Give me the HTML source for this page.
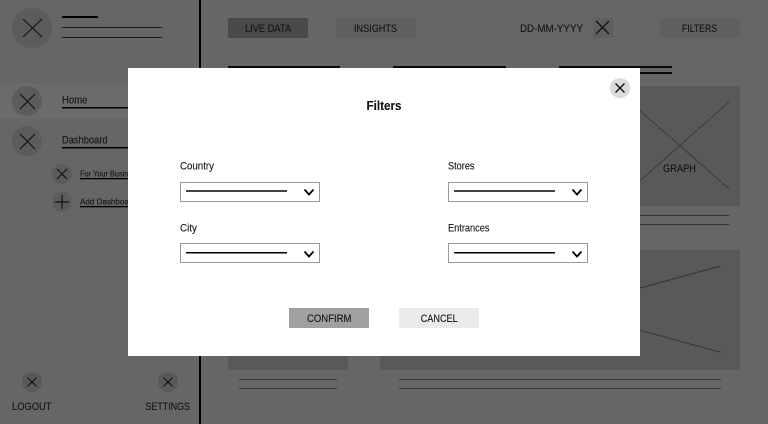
<!DOCTYPE html>
<html>
<head>
<meta charset="utf-8">
<style>
html,body{margin:0;padding:0;width:768px;height:424px;overflow:hidden;background:#666;}
svg{display:block;}
text{font-family:"Liberation Sans",sans-serif;font-size:11px;fill:#141414;stroke:#141414;stroke-width:.12px;}
</style>
</head>
<body>
<svg width="768" height="424" viewBox="0 0 768 424" xmlns="http://www.w3.org/2000/svg">
<rect width="768" height="424" fill="#666"/>
<!-- Sidebar -->
<rect x="0" y="84" width="128" height="34" fill="#6b6b6b"/>
<circle cx="32" cy="28" r="20" fill="#5c5c5c"/>
<path d="M23 19L42 37M42 19L23 37" stroke="#111" stroke-width="1.100" fill="none"/>
<rect x="62" y="16" width="36" height="2" fill="#000"/>
<rect x="62" y="27" width="100" height="1" fill="#1a1a1a"/>
<rect x="62" y="37" width="100" height="1" fill="#1a1a1a"/>
<rect x="199" y="0" width="2" height="424" fill="#000"/>

<circle cx="27" cy="101" r="15" fill="#5c5c5c"/>
<path d="M20 94L35 109M35 94L20 109" stroke="#111" stroke-width="1.200" fill="none"/>
<text x="62" y="103.500" textLength="25.500" lengthAdjust="spacingAndGlyphs">Home</text>
<rect x="62" y="107" width="66" height="1.500" fill="#000"/>

<circle cx="27" cy="141" r="15" fill="#5c5c5c"/>
<path d="M20 134L35 149M35 134L20 149" stroke="#111" stroke-width="1.200" fill="none"/>
<text x="62" y="143.500" textLength="45.500" lengthAdjust="spacingAndGlyphs">Dashboard</text>
<rect x="62" y="147" width="66" height="1.500" fill="#000"/>

<circle cx="62" cy="174" r="10" fill="#5c5c5c"/>
<path d="M57 169L67 179M67 169L57 179" stroke="#111" stroke-width="1.200" fill="none"/>
<text x="80" y="176.500" style="font-size:8.500px" textLength="60" lengthAdjust="spacingAndGlyphs">For Your Business</text>
<rect x="80" y="178" width="48" height="1.300" fill="#000"/>

<circle cx="62" cy="202" r="10" fill="#5c5c5c"/>
<path d="M62 195V209M55 202H69" stroke="#111" stroke-width="1.200" fill="none"/>
<text x="80" y="204.500" style="font-size:8.500px" textLength="56" lengthAdjust="spacingAndGlyphs">Add Dashboard</text>
<rect x="80" y="206" width="48" height="1.300" fill="#000"/>

<circle cx="32" cy="382" r="10" fill="#5a5a5a"/>
<path d="M27.500 377.500L36.500 386.500M36.500 377.500L27.500 386.500" stroke="#111" stroke-width="1.100" fill="none"/>
<text x="12" y="410" textLength="39.500" lengthAdjust="spacingAndGlyphs">LOGOUT</text>
<circle cx="168" cy="382" r="10" fill="#5a5a5a"/>
<path d="M163.500 377.500L172.500 386.500M172.500 377.500L163.500 386.500" stroke="#111" stroke-width="1.100" fill="none"/>
<text x="145.500" y="410" textLength="44.500" lengthAdjust="spacingAndGlyphs">SETTINGS</text>

<!-- Top bar -->
<rect x="228" y="18" width="80" height="20" fill="#4a4a4a"/>
<text x="245" y="32" textLength="46" lengthAdjust="spacingAndGlyphs">LIVE DATA</text>
<rect x="336" y="18" width="80" height="20" fill="#5f5f5f"/>
<text x="354" y="32" textLength="43" lengthAdjust="spacingAndGlyphs">INSIGHTS</text>
<text x="520" y="32" textLength="63" lengthAdjust="spacingAndGlyphs">DD-MM-YYYY</text>
<rect x="593" y="18" width="20" height="20" fill="#5f5f5f"/>
<path d="M596 21L609 34M609 21L596 34" stroke="#111" stroke-width="1.300" fill="none"/>
<rect x="660" y="18" width="80" height="20" fill="#5f5f5f"/>
<text x="682" y="32" textLength="35" lengthAdjust="spacingAndGlyphs">FILTERS</text>

<!-- Content behind -->
<rect x="228" y="66" width="112" height="2" fill="#0a0a0a"/>
<rect x="393" y="66" width="113" height="2" fill="#0a0a0a"/>
<rect x="559" y="66" width="113" height="2" fill="#0a0a0a"/>
<rect x="559" y="72" width="113" height="2" fill="#0a0a0a"/>

<rect x="560" y="86" width="180" height="120" fill="#595959"/>
<path d="M729 102L640 180.700M640 110.700L729 188.700" stroke="#3a3a3a" stroke-width="1" fill="none"/>
<text x="663" y="172" textLength="33" lengthAdjust="spacingAndGlyphs">GRAPH</text>
<rect x="560" y="215" width="169" height="1" fill="#333"/>
<rect x="560" y="224" width="169" height="1" fill="#333"/>

<rect x="228" y="250" width="120" height="120" fill="#595959"/>
<rect x="380" y="250" width="360" height="120" fill="#595959"/>
<path d="M640 288L720.700 266M640 330.300L720.700 352.300" stroke="#333" stroke-width="1" fill="none"/>
<rect x="239" y="379" width="98" height="1" fill="#3a3a3a"/>
<rect x="239" y="388" width="98" height="1" fill="#3a3a3a"/>
<rect x="399" y="379" width="322" height="1" fill="#3a3a3a"/>
<rect x="399" y="388" width="322" height="1" fill="#3a3a3a"/>

<!-- Modal -->
<rect x="128" y="68" width="512" height="288" fill="#fff"/>
<circle cx="620" cy="88" r="10" fill="#dcdcdc"/>
<path d="M615.500 83.500L624.500 92.500M624.500 83.500L615.500 92.500" stroke="#111" stroke-width="1.400" fill="none"/>
<text x="366.500" y="110" style="font-size:13px;font-weight:bold" textLength="35" lengthAdjust="spacingAndGlyphs">Filters</text>

<text x="180" y="169.500" textLength="34" lengthAdjust="spacingAndGlyphs">Country</text>
<rect x="180.500" y="182.500" width="139" height="19" fill="#fff" stroke="#999"/>
<rect x="186" y="190" width="101" height="2" fill="#444"/>
<path d="M304.500 189.500L309 194.500L313.500 189.500" stroke="#000" stroke-width="1.800" fill="none"/>

<text x="448" y="169.500" textLength="26.500" lengthAdjust="spacingAndGlyphs">Stores</text>
<rect x="448.500" y="182.500" width="139" height="19" fill="#fff" stroke="#999"/>
<rect x="454" y="190" width="101" height="2" fill="#444"/>
<path d="M572.500 189.500L577 194.500L581.500 189.500" stroke="#000" stroke-width="1.800" fill="none"/>

<text x="180" y="231.500" textLength="17" lengthAdjust="spacingAndGlyphs">City</text>
<rect x="180.500" y="243.500" width="139" height="19" fill="#fff" stroke="#999"/>
<rect x="186" y="252" width="101" height="1.500" fill="#000"/>
<path d="M304.500 251.500L309 256.500L313.500 251.500" stroke="#000" stroke-width="1.800" fill="none"/>

<text x="448" y="231.500" textLength="41.500" lengthAdjust="spacingAndGlyphs">Entrances</text>
<rect x="448.500" y="243.500" width="139" height="19" fill="#fff" stroke="#999"/>
<rect x="454" y="252" width="101" height="1.500" fill="#000"/>
<path d="M572.500 251.500L577 256.500L581.500 251.500" stroke="#000" stroke-width="1.800" fill="none"/>

<rect x="289" y="308" width="80" height="20" fill="#a0a0a0"/>
<text x="307" y="322" textLength="44.500" lengthAdjust="spacingAndGlyphs">CONFIRM</text>
<rect x="399" y="308" width="80" height="20" fill="#ebebeb"/>
<text x="420.700" y="322" textLength="37" lengthAdjust="spacingAndGlyphs">CANCEL</text>
</svg>
</body>
</html>
